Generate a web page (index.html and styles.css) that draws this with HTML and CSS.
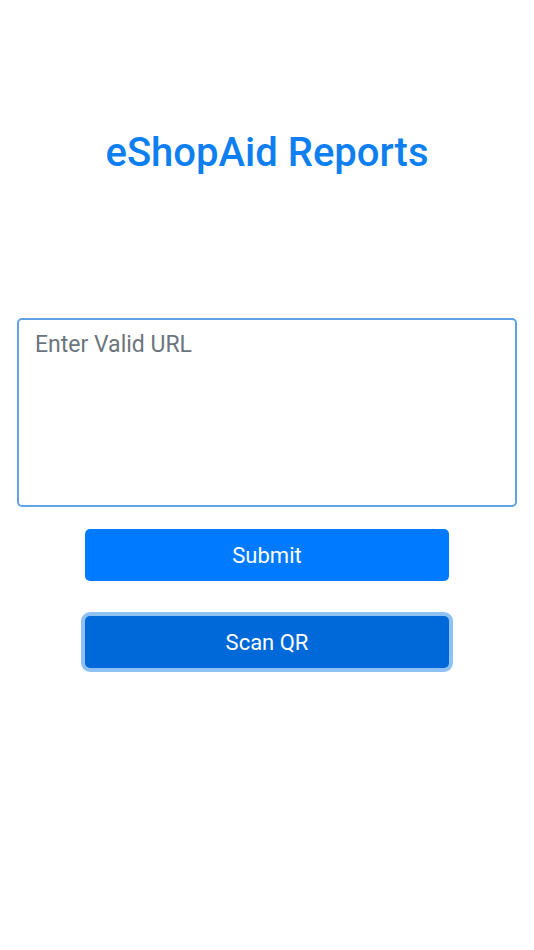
FILE: index.html
```html
<!DOCTYPE html>
<html lang="en">
<head>
    <meta charset="UTF-8">
    <meta name="viewport" content="width=device-width, initial-scale=1.0">
    <title>eShopAid Reports</title>
    <link rel="stylesheet" href="styles.css">
</head>
<body>
    <div class="app">
        <h1 class="title">eShopAid Reports</h1>
        <div class="form">
            <textarea class="url-input" placeholder="Enter Valid URL"></textarea>
            <button class="btn">Submit</button>
            <button class="btn btn-active">Scan QR</button>
        </div>
    </div>
</body>
</html>
```

FILE: styles.css
```css
body {
    margin: 0;
    padding: 0;
    background: #fff;
    font-family: Roboto, 'Noto Sans', sans-serif;
}

.app {
    padding: 0 17px 40px;
}

.title {
    margin: 0;
    padding-top: 128px;
    height: 318px;
    box-sizing: border-box;
    text-align: center;
    color: #0d7ff0;
    font-size: 40px;
    font-weight: 500;
    line-height: 50px;
}

.form {
    display: flex;
    flex-direction: column;
    align-items: center;
}

.url-input {
    display: block;
    width: 100%;
    height: 189px;
    box-sizing: border-box;
    border: 2px solid #62a2e4;
    border-radius: 5px;
    padding: 11px 16px;
    font-family: Roboto, sans-serif;
    font-size: 23px;
    color: #495057;
    resize: none;
    outline: none;
}

.url-input::placeholder {
    color: #6c757d;
}

.btn {
    width: 364px;
    height: 52px;
    margin-top: 22px;
    border: none;
    border-radius: 5px;
    background: #007bff;
    color: #fff;
    font-family: Roboto, sans-serif;
    font-size: 22px;
}

.btn-active {
    margin-top: 35px;
    background: #0069d9;
    box-shadow: 0 0 0 4px #8fc1f2;
}
```
